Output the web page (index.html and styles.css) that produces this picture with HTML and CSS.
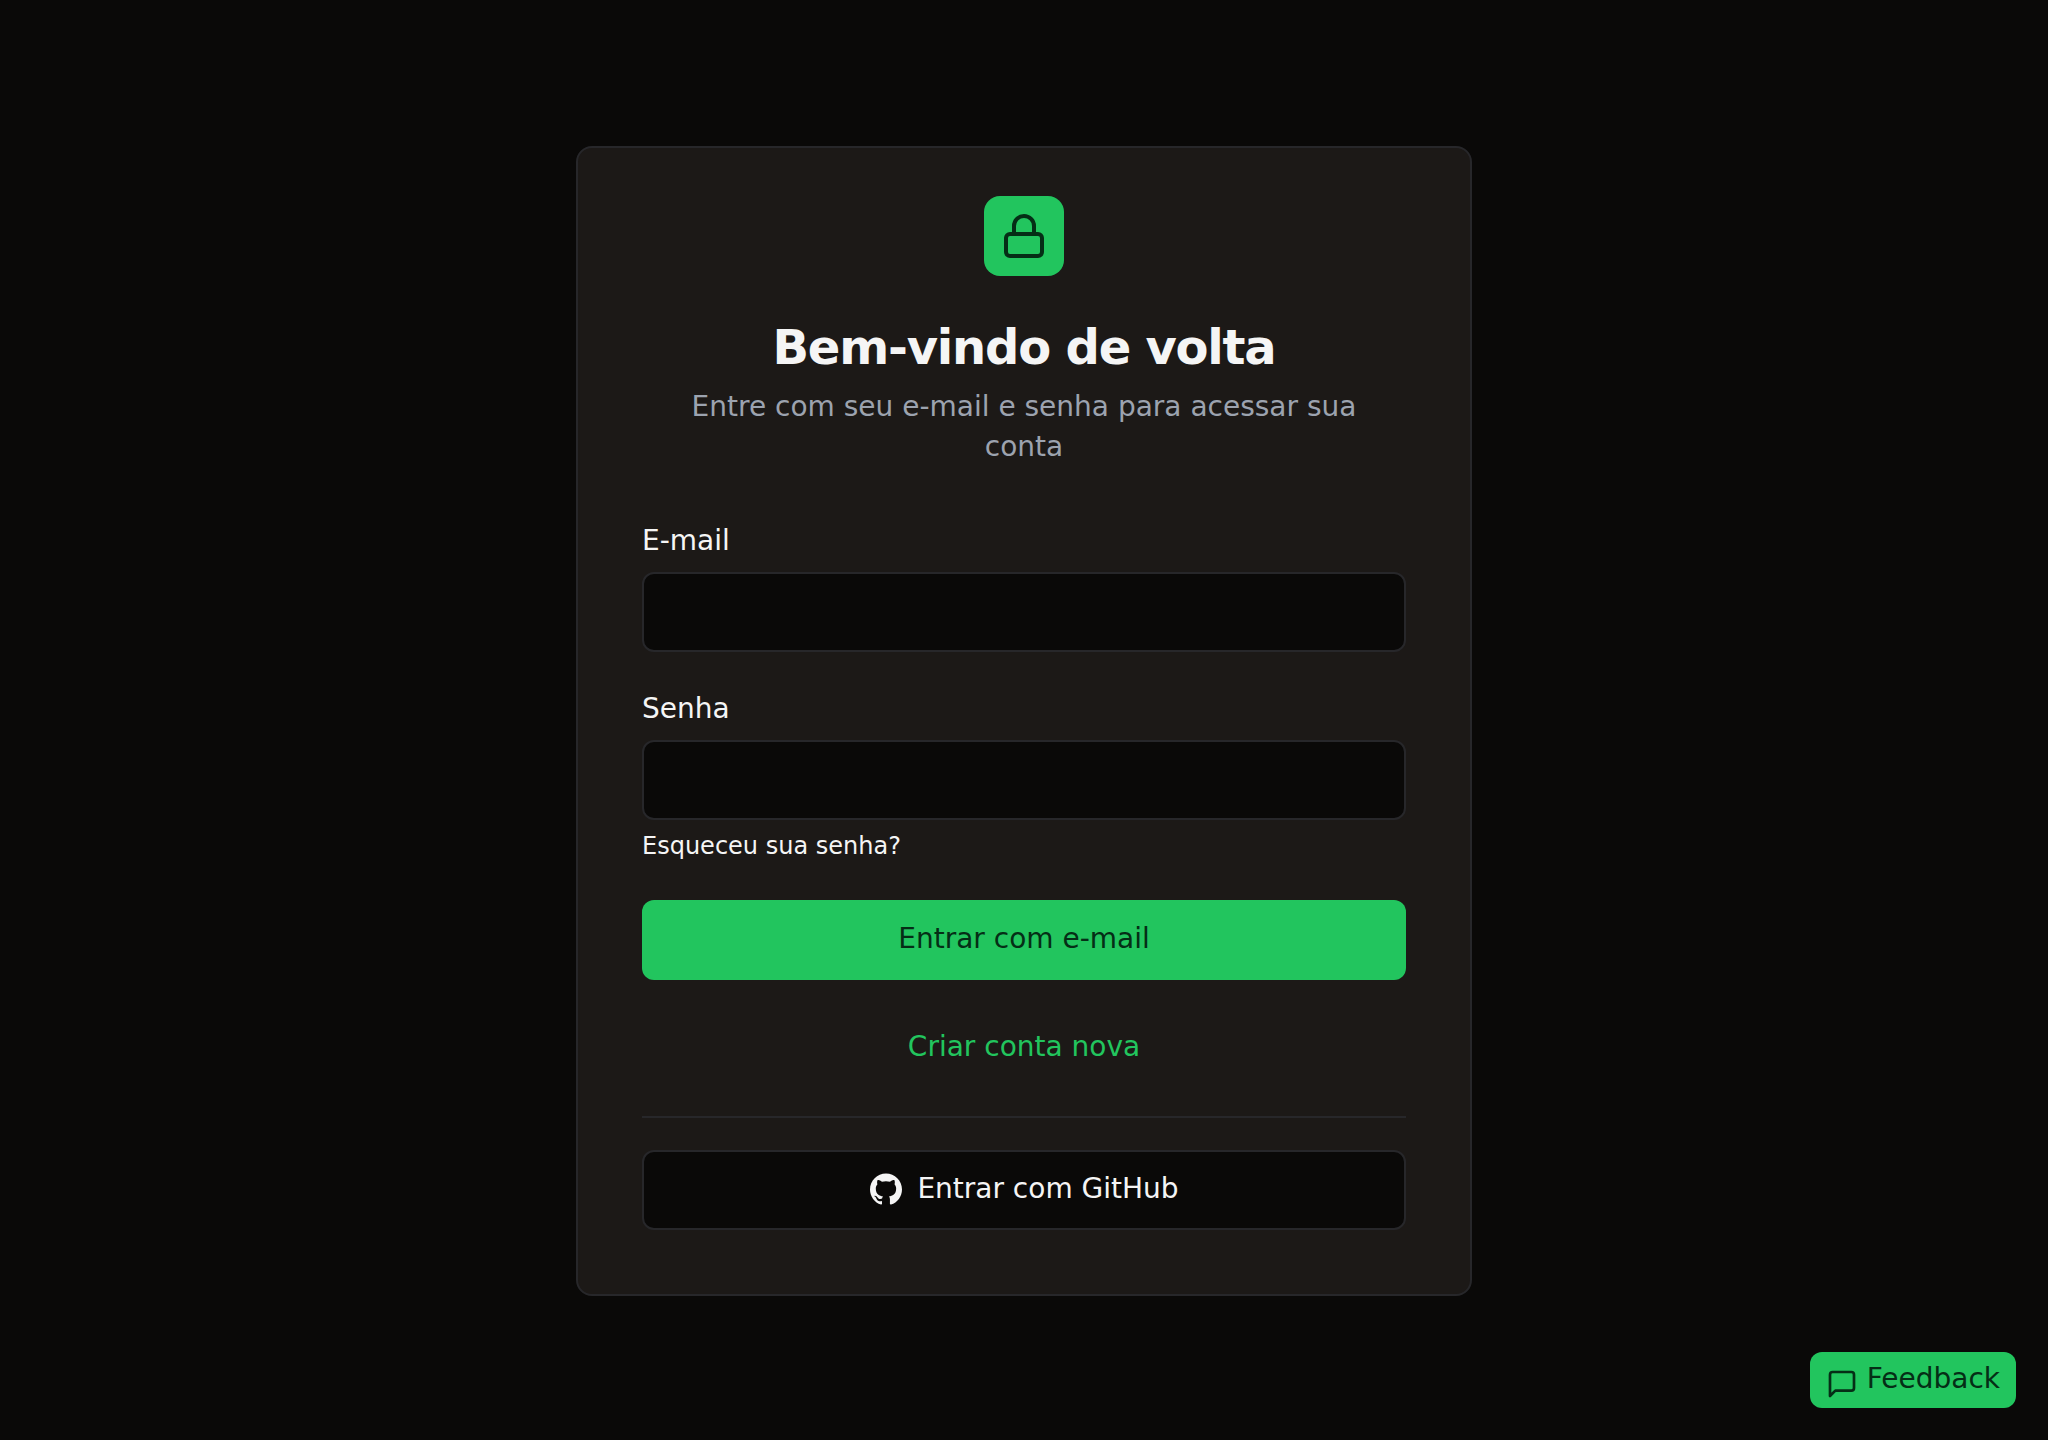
FILE: index.html
```html
<!DOCTYPE html>
<html lang="pt-BR">
<head>
<meta charset="utf-8">
<title>Entrar</title>
<link rel="stylesheet" href="styles.css">
</head>
<body>
<main class="page">
  <section class="card">
    <header class="head">
      <div class="logo">
        <svg class="logo-icon" viewBox="0 0 24 24" fill="none" stroke="currentColor" stroke-width="2" stroke-linecap="round" stroke-linejoin="round"><rect x="3" y="11" width="18" height="11" rx="2"/><path d="M7 11V7a5 5 0 0 1 10 0v4"/></svg>
      </div>
      <h1 class="title">Bem-vindo de volta</h1>
      <p class="subtitle">Entre com seu e-mail e senha para acessar sua conta</p>
    </header>
    <form class="form">
      <div class="field">
        <label class="label" for="email">E-mail</label>
        <input class="input" id="email" type="email">
      </div>
      <div class="field field-password">
        <label class="label" for="senha">Senha</label>
        <input class="input" id="senha" type="password">
        <a class="forgot" href="#">Esqueceu sua senha?</a>
      </div>
      <button class="btn-primary" type="button">Entrar com e-mail</button>
      <a class="create" href="#">Criar conta nova</a>
      <hr class="divider">
      <button class="btn-github" type="button">
        <svg class="github-icon" viewBox="0 0 24 24" fill="currentColor"><path d="M12 .297c-6.63 0-12 5.373-12 12 0 5.303 3.438 9.8 8.205 11.385.6.113.82-.258.82-.577 0-.285-.01-1.04-.015-2.04-3.338.724-4.042-1.61-4.042-1.61C4.422 18.07 3.633 17.7 3.633 17.7c-1.087-.744.084-.729.084-.729 1.205.084 1.838 1.236 1.838 1.236 1.07 1.835 2.809 1.305 3.495.998.108-.776.417-1.305.76-1.605-2.665-.3-5.466-1.332-5.466-5.93 0-1.31.465-2.38 1.235-3.22-.135-.303-.54-1.523.105-3.176 0 0 1.005-.322 3.3 1.23.96-.267 1.98-.399 3-.405 1.02.006 2.04.138 3 .405 2.28-1.552 3.285-1.23 3.285-1.23.645 1.653.24 2.873.12 3.176.765.84 1.23 1.91 1.23 3.22 0 4.61-2.805 5.625-5.475 5.92.42.36.81 1.096.81 2.22 0 1.606-.015 2.896-.015 3.286 0 .315.21.69.825.57C20.565 22.092 24 17.592 24 12.297c0-6.627-5.373-12-12-12"/></svg>
        <span class="github-text">Entrar com GitHub</span>
      </button>
    </form>
  </section>
</main>
<button class="feedback" type="button">
  <svg class="feedback-icon" viewBox="0 0 24 24" fill="none" stroke="currentColor" stroke-width="2" stroke-linecap="round" stroke-linejoin="round"><path d="M21 15a2 2 0 0 1-2 2H7l-4 4V5a2 2 0 0 1 2-2h14a2 2 0 0 1 2 2z"/></svg>
  <span class="feedback-text">Feedback</span>
</button>
</body>
</html>
```
FILE: styles.css
```css
* { box-sizing: border-box; }
html, body { margin: 0; padding: 0; }
body {
  background: #0a0908;
  color: #f5f5f5;
  font-family: "DejaVu Sans", sans-serif;
}
.page {
  min-height: 1440px;
  padding-top: 2px;
  display: flex;
  align-items: center;
  justify-content: center;
}
.card {
  width: 896px;
  padding: 48px 64px 64px;
  background: #1c1917;
  border: 2px solid #27272a;
  border-radius: 16px;
}
.head {
  display: flex;
  flex-direction: column;
  align-items: center;
  text-align: center;
  margin-bottom: 54px;
}
.logo {
  width: 80px;
  height: 80px;
  display: flex;
  align-items: center;
  justify-content: center;
  background: #22c55e;
  color: #052e16;
  border-radius: 16px;
  margin-bottom: 35px;
}
.logo-icon { width: 48px; height: 48px; }
.title {
  margin: 0 0 4px;
  font-size: 48px;
  line-height: 72px;
  font-weight: 700;
  letter-spacing: -0.025em;
  color: #f5f5f5;
}
.subtitle {
  margin: 0;
  max-width: 700px;
  font-size: 28px;
  line-height: 40px;
  color: #9ca3af;
}
.form { display: flex; flex-direction: column; }
.field { display: flex; flex-direction: column; }
.field-password { margin-top: 37px; }
.label {
  font-size: 28px;
  line-height: 40px;
  margin-bottom: 11px;
  color: #f5f5f5;
}
.input {
  height: 80px;
  background: #0a0908;
  border: 2px solid #27272a;
  border-radius: 12px;
  color: #f5f5f5;
  font: inherit;
  padding: 0 24px;
  outline: none;
}
.forgot {
  margin-top: 10px;
  font-size: 24px;
  line-height: 32px;
  color: #f5f5f5;
  text-decoration: none;
}
.btn-primary {
  margin-top: 38px;
  height: 80px;
  padding: 0 0 4px;
  border: 0;
  border-radius: 12px;
  background: #22c55e;
  color: #052e16;
  font: inherit;
  font-size: 28px;
}
.create {
  margin-top: 47px;
  font-size: 28px;
  line-height: 40px;
  text-align: center;
  color: #22c55e;
  text-decoration: none;
}
.divider {
  width: 100%;
  margin: 49px 0 32px;
  border: 0;
  border-top: 2px solid #27272a;
}
.btn-github {
  height: 80px;
  padding: 0 0 2px;
  display: flex;
  align-items: center;
  justify-content: center;
  gap: 15px;
  background: #0a0908;
  border: 2px solid #27272a;
  border-radius: 12px;
  color: #f5f5f5;
  font: inherit;
  font-size: 28px;
}
.github-icon { width: 32px; height: 32px; margin-left: 1px; }
.github-text { margin-bottom: 2px; }
.feedback {
  position: fixed;
  right: 32px;
  bottom: 32px;
  height: 56px;
  padding: 0 16px;
  display: flex;
  align-items: center;
  gap: 9px;
  background: #22c55e;
  color: #052e16;
  border: 0;
  border-radius: 12px;
  font: inherit;
  font-size: 28px;
}
.feedback-icon { width: 32px; height: 32px; margin-top: 8px; }
.feedback-text { margin-bottom: 3px; }
```
